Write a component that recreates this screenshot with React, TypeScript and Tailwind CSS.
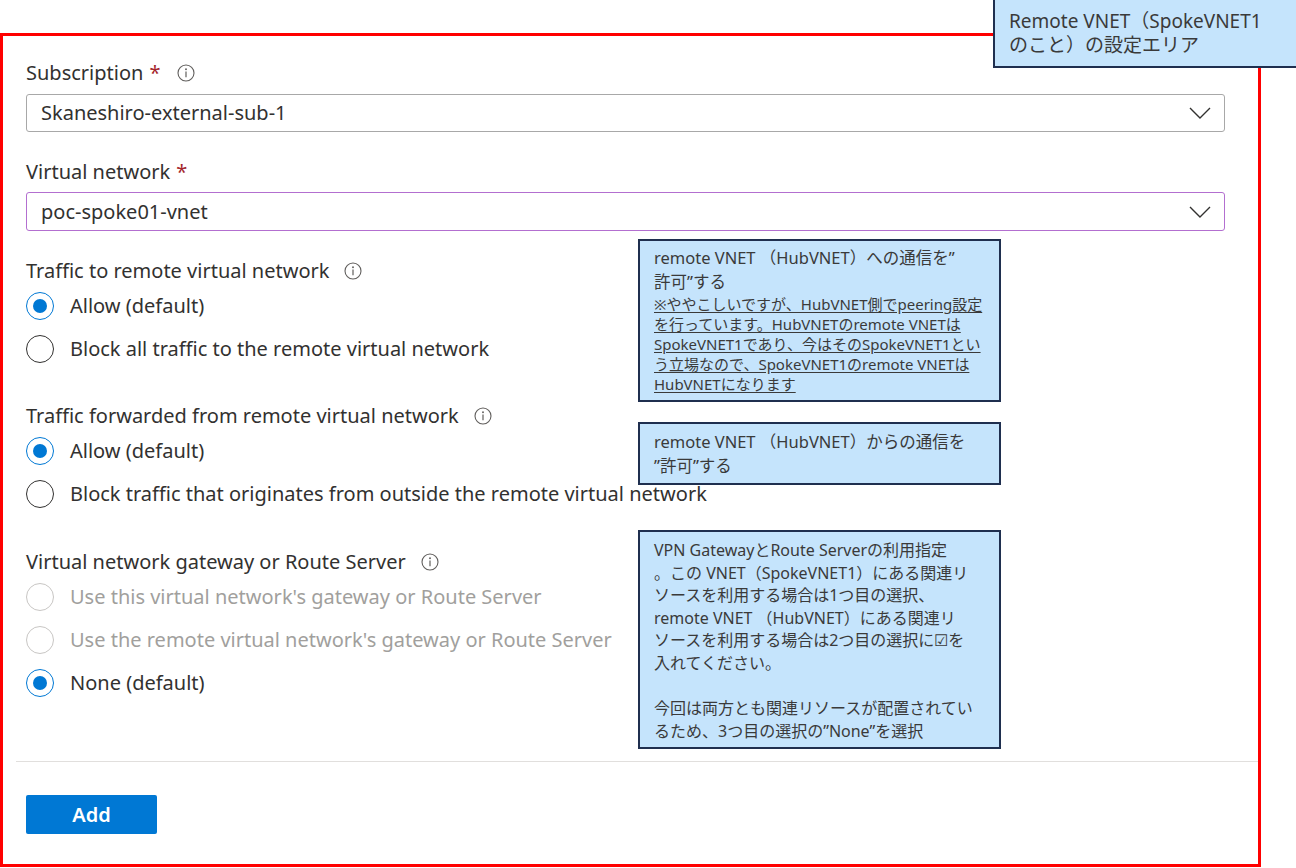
const FONT = "font-['Noto_Sans','Noto_Sans_CJK_JP',sans-serif]";

const InfoIcon = () => (
  <svg width="18" height="18" viewBox="0 0 18 18" className="shrink-0">
    <circle cx="9" cy="9" r="8" fill="none" stroke="#605e5c" strokeWidth="1.1" />
    <circle cx="9" cy="5.3" r="0.95" fill="#605e5c" />
    <path d="M9 7.6v5.6" stroke="#605e5c" strokeWidth="1.2" />
  </svg>
);

const Chevron = () => (
  <svg width="22" height="12" viewBox="0 0 22 12" className="shrink-0">
    <path d="M1 1l10 10 10-10" fill="none" stroke="#323130" strokeWidth="1.4" />
  </svg>
);

type RadioProps = { label: string; checked?: boolean; disabled?: boolean };

const Radio = ({ label, checked, disabled }: RadioProps) => (
  <div className="flex h-[43px] items-center">
    <div
      className={
        checked
          ? "flex h-[28px] w-[28px] items-center justify-center rounded-full border-[1.5px] border-[#0078d4]"
          : disabled
            ? "h-[28px] w-[28px] rounded-full border-[1.5px] border-[#c8c6c4]"
            : "h-[28px] w-[28px] rounded-full border-[1.5px] border-[#323130]"
      }
    >
      {checked && <div className="h-[14px] w-[14px] rounded-full bg-[#0078d4]" />}
    </div>
    <span
      className={
        disabled
          ? "ml-[16px] text-[20px] text-[#a19f9d]"
          : "ml-[16px] text-[20px] text-[#323130]"
      }
    >
      {label}
    </span>
  </div>
);

const Label = ({ text, required, info }: { text: string; required?: boolean; info?: boolean }) => (
  <div className="flex h-[26px] items-center text-[20px] text-[#323130]">
    <span>{text}</span>
    {required && <span className="ml-[6px] text-[#a4262c]">*</span>}
    {info && (
      <span className={required ? "ml-[17px] flex" : "ml-[15px] flex"}>
        <InfoIcon />
      </span>
    )}
  </div>
);

const Select = ({ value, focused }: { value: string; focused?: boolean }) => (
  <div
    className={
      focused
        ? "flex h-[39px] w-[1199px] items-center justify-between rounded-[3px] border border-[#b36fd0] pl-[14px] pr-[13px]"
        : "flex h-[38px] w-[1199px] items-center justify-between rounded-[3px] border border-[#a8a8a8] pl-[14px] pr-[13px]"
    }
  >
    <span className="text-[20px] text-[#323130]">{value}</span>
    <Chevron />
  </div>
);

const Callout = ({ className, children }: { className: string; children: React.ReactNode }) => (
  <div
    className={`absolute whitespace-nowrap border-2 border-[#1f2f4f] bg-[#c5e4fc] px-[14px] text-[#3a3a3a] ${className}`}
  >
    {children}
  </div>
);

export default function App() {
  return (
    <div className={`relative h-[868px] w-[1296px] overflow-hidden bg-white ${FONT}`}>
      {/* Red annotation frame holding the peering form */}
      <div className="ml-0 mt-[33px] h-[834px] w-[1261px] border-[3px] border-[#ff0000]">
        <div className="pl-[23px] pr-[33px] pt-[24px]">
          <Label text="Subscription" required info />
          <div className="mt-[8px]">
            <Select value="Skaneshiro-external-sub-1" />
          </div>

          <div className="mt-[27px]">
            <Label text="Virtual network" required />
          </div>
          <div className="mt-[7px]">
            <Select value="poc-spoke01-vnet" focused />
          </div>

          <div className="mt-[27px]">
            <Label text="Traffic to remote virtual network" info />
          </div>
          <Radio label="Allow (default)" checked />
          <Radio label="Block all traffic to the remote virtual network" />

          <div className="mt-[33px]">
            <Label text="Traffic forwarded from remote virtual network" info />
          </div>
          <Radio label="Allow (default)" checked />
          <Radio label="Block traffic that originates from outside the remote virtual network" />

          <div className="mt-[34px]">
            <Label text="Virtual network gateway or Route Server" info />
          </div>
          <Radio label="Use this virtual network's gateway or Route Server" disabled />
          <Radio label="Use the remote virtual network's gateway or Route Server" disabled />
          <Radio label="None (default)" checked />
        </div>

        <div className="ml-[13px] mt-[57px] h-px bg-[#e1dfdd]" />

        <div className="pl-[23px] pt-[33px]">
          <button
            type="button"
            className="h-[39px] w-[131px] rounded-[2px] bg-[#0078d4] text-[20px] font-semibold text-white"
          >
            Add
          </button>
        </div>
      </div>

      {/* Annotation callouts */}
      <Callout className="left-[993px] top-[-2px] h-[70px] w-[305px] pt-[9px] text-[19px] leading-[24px]">
        Remote VNET（SpokeVNET1
        <br />
        のこと）の設定エリア
      </Callout>

      <Callout className="left-[638px] top-[239px] h-[163px] w-[363px] pt-[5px]">
        <div className="text-[16.5px] leading-[24px]">
          remote VNET （HubVNET）への通信を”
          <br />
          許可”する
        </div>
        <div className="text-[15px] leading-[20px] underline underline-offset-2">
          ※ややこしいですが、HubVNET側でpeering設定
          <br />
          を行っています。HubVNETのremote VNETは
          <br />
          SpokeVNET1であり、今はそのSpokeVNET1とい
          <br />
          う立場なので、SpokeVNET1のremote VNETは
          <br />
          HubVNETになります
        </div>
      </Callout>

      <Callout className="left-[638px] top-[422px] h-[63px] w-[363px] pt-[6px] text-[16.5px] leading-[24px]">
        remote VNET （HubVNET）からの通信を
        <br />
        ”許可”する
      </Callout>

      <Callout className="left-[638px] top-[530px] h-[219px] w-[363px] pt-[7px] text-[16px] leading-[22.6px]">
        VPN GatewayとRoute Serverの利用指定
        <br />
        。この VNET（SpokeVNET1）にある関連リ
        <br />
        ソースを利用する場合は1つ目の選択、
        <br />
        remote VNET （HubVNET）にある関連リ
        <br />
        ソースを利用する場合は2つ目の選択に☑を
        <br />
        入れてください。
        <br />
        <br />
        今回は両方とも関連リソースが配置されてい
        <br />
        るため、3つ目の選択の”None”を選択
      </Callout>
    </div>
  );
}
